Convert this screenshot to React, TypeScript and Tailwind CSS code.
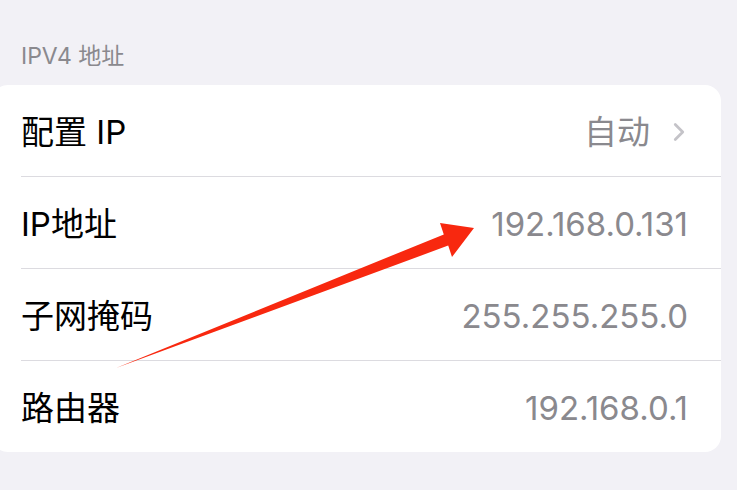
import { ChevronRight } from 'lucide-react';

const rows = [
  { label: '配置 IP', value: '自动', chevron: true },
  { label: 'IP地址', value: '192.168.0.131' },
  { label: '子网掩码', value: '255.255.255.0' },
  { label: '路由器', value: '192.168.0.1' },
];

function Arrow() {
  return (
    <svg className="pointer-events-none absolute left-0 top-0" width="737" height="490" viewBox="0 0 737 490">
      <polygon
        points="116,368 443.8,234.4 440,223 474,228 452,257 448.2,245.6"
        fill="#f8280f"
        strokeLinejoin="round"
      />
    </svg>
  );
}

export default function App() {
  return (
    <div
      className="relative h-[490px] w-[737px] overflow-hidden bg-[#f2f1f6]"
      style={{ fontFamily: 'Inter, "Noto Sans CJK SC", sans-serif' }}
    >
      <div className="flex h-[85px] items-end pb-[17px] pl-[21px] text-[23px] leading-none text-[#8a898e]">
        IPV4 地址
      </div>
      <div className="ml-[-8px] w-[729px] rounded-[16px] bg-white">
        {rows.map((row, i) => (
          <div key={row.label} className="flex h-[92px] flex-col pl-[29px] last:h-[91px]">
            <div className="flex flex-1 items-center justify-between pr-[33px] pt-[3px]">
              <span className="text-[33px] leading-none text-black">{row.label}</span>
              <span className="flex items-center text-[33px] leading-none text-[#8a898e]">
                {row.value}
                {row.chevron && (
                  <ChevronRight className="ml-[14px] mr-[-6px] h-[30px] w-[30px] text-[#c4c3c8]" strokeWidth={2.2} />
                )}
              </span>
            </div>
            {i < rows.length - 1 && <div className="h-px bg-[#dcdbe0]" />}
          </div>
        ))}
      </div>
      <Arrow />
    </div>
  );
}
